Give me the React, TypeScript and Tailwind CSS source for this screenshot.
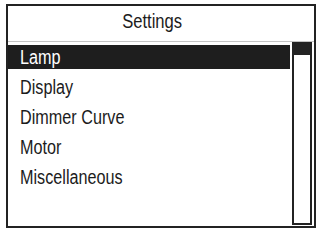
import React from 'react';

const items = ['Lamp', 'Display', 'Dimmer Curve', 'Motor', 'Miscellaneous'];

function Label({ text }: { text: string }) {
  return (
    <span className="inline-block origin-left scale-x-[0.81] whitespace-nowrap text-[20px] leading-[20px]">
      {text}
    </span>
  );
}

export default function App() {
  const selected = 0;

  return (
    <div
      className="w-[317px] h-[228px] bg-white pl-[6px] pt-[4px]"
      style={{ fontFamily: '"Liberation Sans", Arial, sans-serif' }}
    >
      <div className="w-[310px] h-[224px] border-2 border-[#232323] flex flex-col text-[#1c1c1c]">
        {/* Header */}
        <div className="h-[36px] shrink-0 border-b border-[#c4c4c4] pt-[5px] pr-[18px] flex justify-center">
          <span className="inline-block scale-x-[0.83] whitespace-nowrap text-[20px] leading-[20px]">
            Settings
          </span>
        </div>

        {/* Body */}
        <div className="flex flex-1">
          <ul className="w-[282px] pt-[3px] flex flex-col gap-[6px]">
            {items.map((item, i) => (
              <li
                key={item}
                className={
                  i === selected
                    ? 'h-[24px] flex items-center pl-[12px] bg-[#1e1e1e] text-white'
                    : 'h-[24px] flex items-center pl-[12px]'
                }
              >
                <Label text={item} />
              </li>
            ))}
          </ul>

          {/* Scrollbar */}
          <div className="ml-[2px] w-[20px] h-[183px] border-2 border-[#232323] flex flex-col">
            <div className="h-[11px] bg-[#232323]" />
          </div>
        </div>
      </div>
    </div>
  );
}
